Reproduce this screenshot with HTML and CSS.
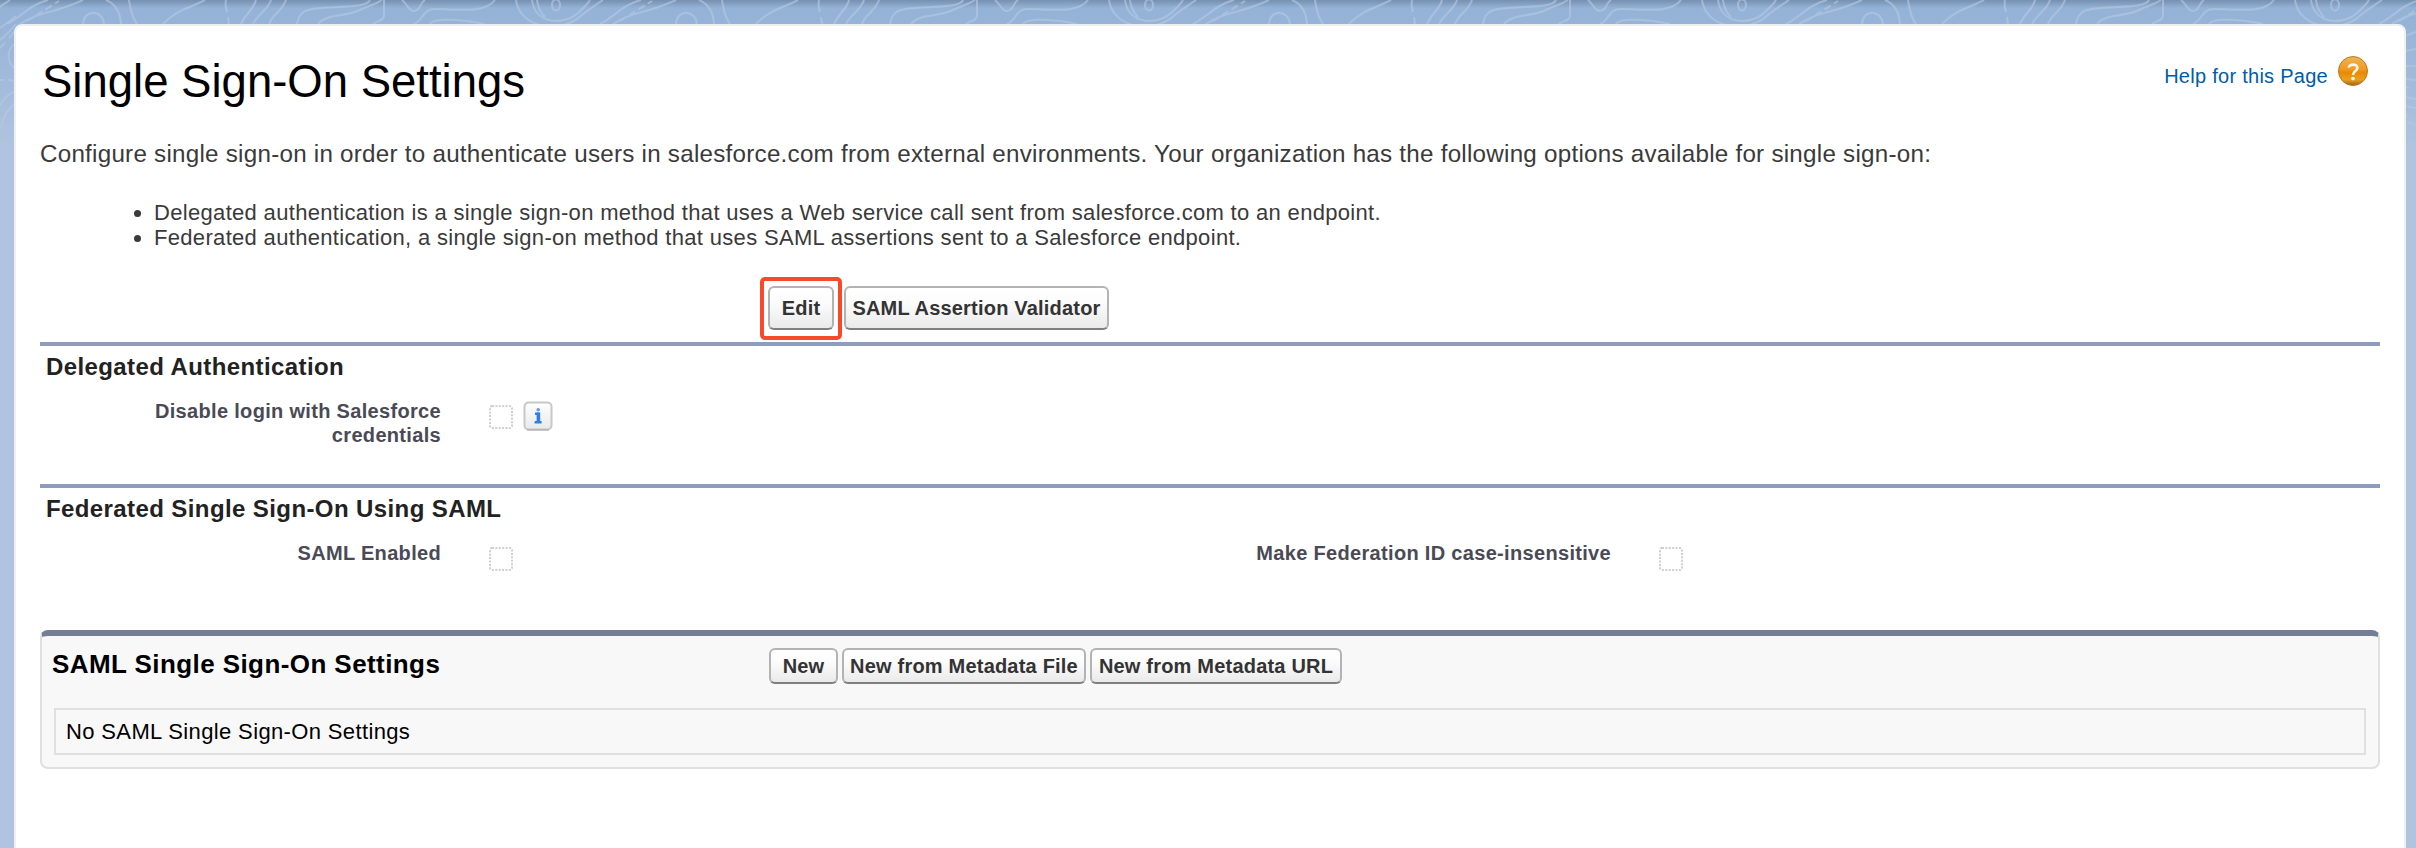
FILE: index.html
```
<!DOCTYPE html>
<html lang="en">
<head>
<meta charset="utf-8">
<title>Single Sign-On Settings</title>
<link rel="stylesheet" href="styles.css">
</head>
<body>
<svg class="contours" width="2416" height="240" aria-hidden="true">
  <defs>
    <pattern id="topo" x="222" y="0" width="593" height="24" patternUnits="userSpaceOnUse">
      <g class="contour-line">
        <path d="M4 0C3 5 4 9 5 12M6 17L7 24M34 0C32 9 24 13 19 24M49 0C46 10 36 14 31 24M64 0C60 12 51 13 47 24"/>
        <path d="M75 24C77 10 86 9 100 8C126 6 145 7 148 0M96 24C106 13 124 17 138 10C148 5 153 5 160 0M162 0V16C161 22 155 20 151 24"/>
        <path d="M180 0C186 5 188 14 195 10C199 8 198 3 203 0M192 24C202 20 200 9 213 9C235 9 263 14 273 0M208 24C212 17 245 20 262 24"/>
        <path d="M294 0C298 29 340 35 361 14Q372 6 381 0M310 0C313 25 343 26 357 12Q365 5 368 0M315 0Q316 10 323 17"/>
        <ellipse cx="334" cy="5" rx="4" ry="5.5"/>
        <path d="M378 24C394 16 400 5 419 0M391 24C411 11 424 14 454 0"/>
        <path stroke-dasharray="7 4" d="M398 21L430 1"/>
        <path d="M477 0Q491 6 492 24M500 0Q502 16 508 24M454 24C455 9 473 9 475 24M534 24C547 10 561 8 576 0"/>
      </g>
    </pattern>
  </defs>
  <rect width="2416" height="24" fill="url(#topo)"/>
  <g class="contour-line">
    <path d="M0 28Q9 22 16 16M0 40Q8 34 16 24M0 48L5 43M9 38L15 31M16 43C7 49 6 60 14 68M0 80L4 80M8 80L14 81M0 105Q6 95 14 92M0 130Q4 112 14 104"/>
    <path d="M2405 36L2416 32M2405 51L2416 49M2405 66H2416M2405 79L2416 80M2405 87L2409 88M2405 97L2416 99M2405 106L2416 108M2405 116L2409 117M2405 122L2416 124"/>
  </g>
</svg>
<main class="page">
  <header class="page-head">
    <h1 class="title">Single Sign-On Settings</h1>
    <a class="help" href="#">Help for this Page
      <svg width="30" height="30" viewBox="0 0 30 30" aria-hidden="true">
        <defs><linearGradient id="amber" x2="0" y2="1"><stop offset="0" stop-color="#f0b553"/><stop offset=".45" stop-color="#ef9a20"/><stop offset=".55" stop-color="#e98a00"/><stop offset=".8" stop-color="#eba01c"/><stop offset="1" stop-color="#9a621c"/></linearGradient></defs>
        <circle cx="15" cy="15" r="14.5" fill="url(#amber)" stroke="#b87a28"/>
        <path d="M10.8 11.8C10.8 7.6 19.5 7.4 19.4 12C19.3 15 15 15 15 19" fill="none" stroke="#fff6e6" stroke-width="2.6"/>
        <circle cx="15" cy="22.6" r="1.8" fill="#fff6e6"/>
      </svg>
    </a>
  </header>
  <p class="intro">Configure single sign-on in order to authenticate users in salesforce.com from external environments. Your organization has the following options available for single sign-on:</p>
  <ul class="options">
    <li>Delegated authentication is a single sign-on method that uses a Web service call sent from salesforce.com to an endpoint.</li>
    <li>Federated authentication, a single sign-on method that uses SAML assertions sent to a Salesforce endpoint.</li>
  </ul>
  <div class="actions">
    <span class="highlight"><button class="btn btn-edit">Edit</button></span>
    <button class="btn btn-validator">SAML Assertion Validator</button>
  </div>
  <section class="section">
    <h2 class="section-title">Delegated Authentication</h2>
    <div class="fields">
      <div class="field">
        <span class="label">Disable login with Salesforce credentials</span>
        <svg class="check" viewBox="0 0 24 24"><rect x="1" y="1" width="22" height="22" rx="2"/></svg>
        <svg class="info" width="30" height="30" viewBox="0 0 30 30">
          <defs><linearGradient id="silver" x2="0" y2="1"><stop offset="0" stop-color="#fff"/><stop offset="1" stop-color="#e9e9eb"/></linearGradient></defs>
          <rect x="1.5" y="1.5" width="27" height="27" rx="4" fill="url(#silver)" stroke="#c8c8ca" stroke-width="2"/>
          <path d="M4 28.8H26" stroke="#b4b4b4" stroke-width="1.5"/>
          <path d="M12 12.8H15.4V21.5M11.6 21.3H18.6" fill="none" stroke="#2e7fe0" stroke-width="2.6"/>
          <path d="M15.4 11.6V21.5" stroke="#2e7fe0" stroke-width="3.6"/>
          <circle cx="15.2" cy="8.8" r="1.8" fill="#5c9ce8"/>
        </svg>
      </div>
    </div>
  </section>
  <section class="section">
    <h2 class="section-title">Federated Single Sign-On Using SAML</h2>
    <div class="fields">
      <div class="field">
        <span class="label">SAML Enabled</span>
        <svg class="check" viewBox="0 0 24 24"><rect x="1" y="1" width="22" height="22" rx="2"/></svg>
      </div>
      <div class="field">
        <span class="label">Make Federation ID case-insensitive</span>
        <svg class="check" viewBox="0 0 24 24"><rect x="1" y="1" width="22" height="22" rx="2"/></svg>
      </div>
    </div>
  </section>
  <section class="related">
    <div class="related-head">
      <h2 class="related-title">SAML Single Sign-On Settings</h2>
      <button class="btn btn-new">New</button>
      <button class="btn btn-file">New from Metadata File</button>
      <button class="btn btn-url">New from Metadata URL</button>
    </div>
    <div class="empty">No SAML Single Sign-On Settings</div>
  </section>
</main>
</body>
</html>
```
FILE: styles.css
```
* { box-sizing: border-box; }
body {
  margin: 0;
  height: 848px;
  overflow: hidden;
  padding: 24px 10px 0 14px;
  font-family: "Liberation Sans", Arial, sans-serif;
  background: linear-gradient(rgba(70, 90, 115, .38), rgba(70, 90, 115, 0) 8px) no-repeat, linear-gradient(#93b2d6, #97b4d7 28px, #b0c4df 150px);
}
.contours { position: absolute; left: 0; top: 0; }
.contour-line { fill: none; stroke: #b4c7e2; stroke-width: 2; opacity: .65; }
.page {
  position: relative;
  height: 840px;
  padding: 0 24px;
  background: #fff;
  border: 2px solid #f0f0f1;
  border-radius: 8px;
}
.page-head { display: flex; justify-content: space-between; height: 105px; }
.title { margin: 30px 0 0 2px; font-size: 45.5px; line-height: 52px; font-weight: 400; color: #000; white-space: nowrap; }
.help { display: flex; gap: 10px; height: 30px; margin: 30px 12px 0 0; font-size: 20px; line-height: 40px; letter-spacing: .27px; color: #015ba7; text-decoration: none; white-space: nowrap; }
.intro { margin: 7px 0 0; font-size: 24.2px; line-height: 32px; letter-spacing: .25px; color: #3a3a3a; white-space: nowrap; }
.options { margin: 30px 0 0; padding: 0 0 0 114px; font-size: 22px; line-height: 25px; letter-spacing: .32px; color: #3a3a3a; }
.options li { white-space: nowrap; }
.actions { display: flex; gap: 2px; padding: 27px 0 0 720px; height: 92px; }
.highlight { width: 82px; height: 63px; padding: 5px 4px; border: 4px solid #f64a29; border-radius: 5px; }
.btn {
  display: block;
  height: 44px;
  padding: 0;
  font: 700 20px/38px "Liberation Sans", Arial, sans-serif;
  letter-spacing: .2px;
  color: #333;
  white-space: nowrap;
  border: 2px solid #b3b3b3;
  border-bottom-color: #7f7f7f;
  border-radius: 6px;
  background: linear-gradient(#fff, #fcfcfc 35%, #eaeaea);
}
.btn-edit { width: 66px; }
.btn-validator { width: 265px; margin-top: 9px; }
.section { height: 142px; border-top: 4px solid #8e9dbe; }
.section-title { margin: 0; padding: 7px 0 0 6px; font-size: 24px; line-height: 28px; letter-spacing: .4px; color: #222; }
.fields { display: grid; grid-template-columns: 1fr 1fr; padding-top: 18px; }
.field { display: flex; align-items: flex-start; }
.label { width: 401px; padding-left: 40px; font-size: 20px; line-height: 24px; letter-spacing: .32px; font-weight: 700; color: #4a4a56; text-align: right; }
.check { width: 24px; height: 24px; margin: 6px 0 0 48px; fill: #fff; stroke: #cfcfcf; stroke-width: 2; stroke-dasharray: 2 1.4; }
.info { margin: 2px 0 0 10px; }
.related { margin-top: 4px; height: 139px; padding: 12px 12px 0; border: 2px solid #e0e0e0; border-top: 6px solid #747e96; border-radius: 8px; background: #f8f8f8; }
.related-head { display: flex; gap: 4px; height: 60px; }
.related-title { width: 713px; margin: 0 0 0 -2px; font-size: 26px; line-height: 33px; letter-spacing: .42px; color: #000; }
.related .btn { height: 36px; line-height: 32px; }
.btn-new { width: 69px; }
.btn-file { width: 244px; }
.btn-url { width: 252px; }
.empty { height: 47px; padding-left: 10px; font-size: 22px; line-height: 44px; letter-spacing: .36px; color: #000; border: 2px solid #e0e0e0; }
```
